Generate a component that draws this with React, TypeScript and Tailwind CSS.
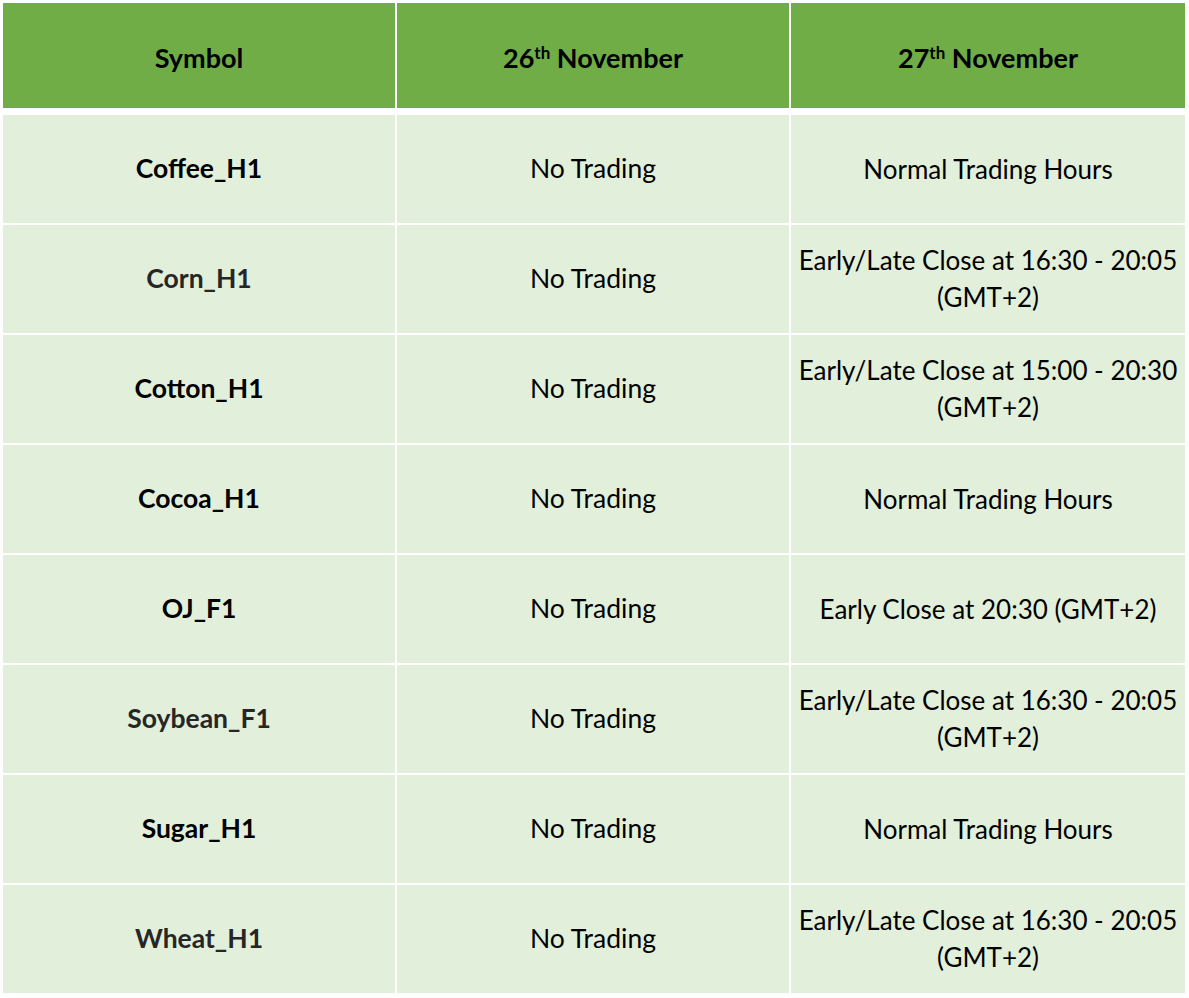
const rows = [
  { sym: "Coffee_H1", dark: false, d26: "No Trading", d27: ["Normal Trading Hours"] },
  { sym: "Corn_H1", dark: true, d26: "No Trading", d27: ["Early/Late Close at 16:30 - 20:05", "(GMT+2)"] },
  { sym: "Cotton_H1", dark: false, d26: "No Trading", d27: ["Early/Late Close at 15:00 - 20:30", "(GMT+2)"] },
  { sym: "Cocoa_H1", dark: false, d26: "No Trading", d27: ["Normal Trading Hours"] },
  { sym: "OJ_F1", dark: false, d26: "No Trading", d27: ["Early Close at 20:30 (GMT+2)"] },
  { sym: "Soybean_F1", dark: true, d26: "No Trading", d27: ["Early/Late Close at 16:30 - 20:05", "(GMT+2)"] },
  { sym: "Sugar_H1", dark: false, d26: "No Trading", d27: ["Normal Trading Hours"] },
  { sym: "Wheat_H1", dark: true, d26: "No Trading", d27: ["Early/Late Close at 16:30 - 20:05", "(GMT+2)"] },
];

const cols = "grid grid-cols-[392px_392px_394px] gap-x-[2px]";

export default function App() {
  return (
    <div
      className="w-[1189px] h-[998px] bg-white pt-[3px] pl-[3px] text-black"
      style={{ fontFamily: "Lato, 'Open Sans', sans-serif" }}
    >
      {/* header */}
      <div className={`${cols} h-[105px]`}>
        <div className="bg-[#70ad47] flex items-center justify-center pt-[5px] text-[27px] font-bold">Symbol</div>
        <div className="bg-[#70ad47] flex items-center justify-center pt-[5px] text-[27px] font-bold">
          26<sup className="text-[17px] relative -top-[5px]">th</sup>&nbsp;November
        </div>
        <div className="bg-[#70ad47] flex items-center justify-center pt-[5px] text-[27px] font-bold">
          27<sup className="text-[17px] relative -top-[5px]">th</sup>&nbsp;November
        </div>
      </div>

      {/* body */}
      <div className={`${cols} mt-[7px] grid-rows-[repeat(8,108px)] gap-y-[2px]`}>
        {rows.map((r) => (
          <div key={r.sym} className="contents">
            <div
              className={`bg-[#e2efda] flex items-center justify-center text-[26.5px] font-bold ${
                r.dark ? "text-[#262626]" : "text-black"
              }`}
            >
              {r.sym}
            </div>
            <div className="bg-[#e2efda] flex items-center justify-center text-[26.5px]">{r.d26}</div>
            <div className="bg-[#e2efda] flex flex-col items-center justify-center text-[26px] leading-[37px] text-center">
              {r.d27.map((t) => (
                <span key={t}>{t}</span>
              ))}
            </div>
          </div>
        ))}
      </div>
    </div>
  );
}
